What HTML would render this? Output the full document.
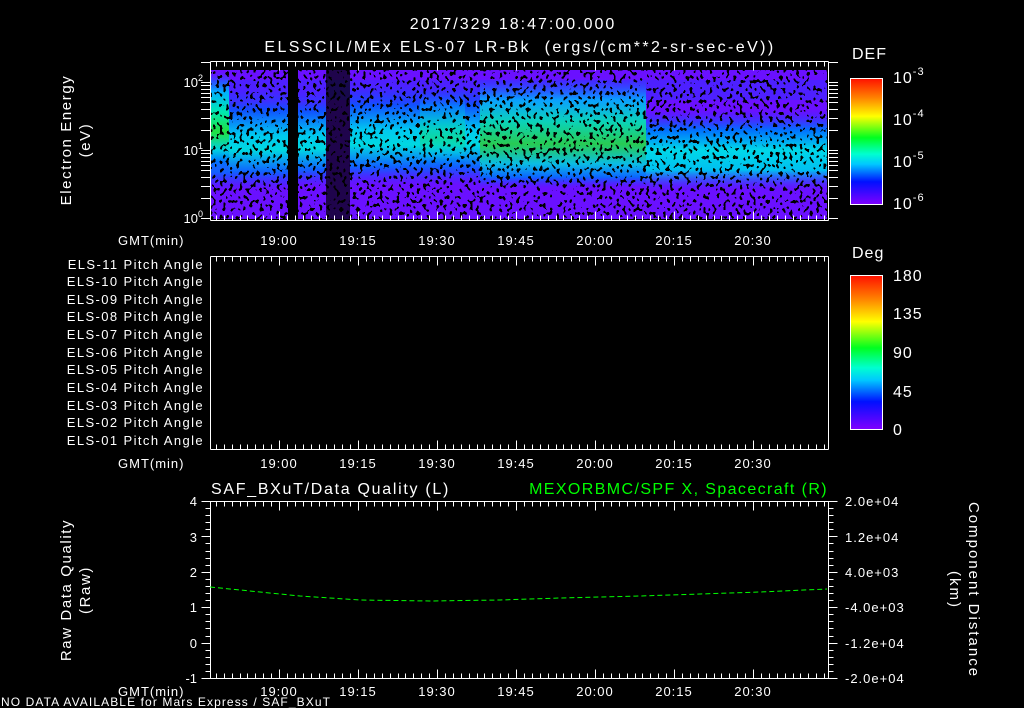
<!DOCTYPE html>
<html><head><meta charset="utf-8"><style>
html,body{margin:0;padding:0;background:#000;}
svg{display:block}
text{font-family:"Liberation Sans",sans-serif;fill:#fff;white-space:pre;}
</style></head><body>
<svg id="s" width="1024" height="708" viewBox="0 0 1024 708" xmlns="http://www.w3.org/2000/svg">
<defs>
<filter id="nz" x="0" y="0" width="100%" height="100%" filterUnits="userSpaceOnUse" color-interpolation-filters="sRGB">
<feTurbulence type="fractalNoise" baseFrequency="0.3 0.25" numOctaves="1" seed="7"/>
<feColorMatrix type="matrix" values="0 0 0 0 0  0 0 0 0 0  0 0 0 0 0  1 0 0 0 0"/>
<feComponentTransfer><feFuncA type="discrete" tableValues="0 0 0 1 1"/></feComponentTransfer>
</filter>
<filter id="nz2" x="0" y="0" width="100%" height="100%" filterUnits="userSpaceOnUse" color-interpolation-filters="sRGB">
<feTurbulence type="fractalNoise" baseFrequency="0.3 0.2" numOctaves="1" seed="3"/>
<feColorMatrix type="matrix" values="0 0 0 0 0  0 0 0 0 0  0 0 0 0 0  1 0 0 0 0"/>
<feComponentTransfer><feFuncA type="discrete" tableValues="0 0 0 0 0 0 0 1"/></feComponentTransfer>
</filter>
<linearGradient id="cb" x1="0" y1="0" x2="0" y2="1">
<stop offset="0" stop-color="#ff1000"/><stop offset="0.15" stop-color="#ff8000"/>
<stop offset="0.3" stop-color="#ffff00"/><stop offset="0.47" stop-color="#00ff20"/>
<stop offset="0.6" stop-color="#00ffd0"/><stop offset="0.68" stop-color="#00c8ff"/>
<stop offset="0.82" stop-color="#0010ff"/><stop offset="1" stop-color="#8000ff"/>
</linearGradient>
<linearGradient id="bandA" x1="0" y1="0" x2="0" y2="1">
<stop offset="0" stop-color="#2040ff" stop-opacity="0"/><stop offset="0.2" stop-color="#1050ff"/>
<stop offset="0.45" stop-color="#00c8f0"/><stop offset="0.6" stop-color="#00d8e0"/>
<stop offset="0.82" stop-color="#1060ff"/><stop offset="1" stop-color="#3030ff" stop-opacity="0"/>
</linearGradient>
<linearGradient id="bandG" x1="0" y1="0" x2="0" y2="1">
<stop offset="0" stop-color="#1060ff" stop-opacity="0"/><stop offset="0.2" stop-color="#00b0ff"/>
<stop offset="0.4" stop-color="#00e8b0"/><stop offset="0.6" stop-color="#20e040"/>
<stop offset="0.78" stop-color="#00d0e0"/><stop offset="0.9" stop-color="#0070ff"/>
<stop offset="1" stop-color="#3030ff" stop-opacity="0"/>
</linearGradient>
<linearGradient id="bandB" x1="0" y1="0" x2="0" y2="1">
<stop offset="0" stop-color="#3030ff" stop-opacity="0"/><stop offset="0.25" stop-color="#0070ff"/>
<stop offset="0.5" stop-color="#00d8e8"/><stop offset="0.75" stop-color="#00c0f0"/>
<stop offset="1" stop-color="#2040ff" stop-opacity="0"/>
</linearGradient>
</defs>

<rect x="211" y="70" width="616" height="149" fill="#6a10ff"/>
<rect x="211" y="80" width="616" height="20" fill="#3030ff" opacity="0.5"/>
<rect x="211" y="90" width="77" height="100" fill="url(#bandA)"/>
<rect x="211" y="72" width="18" height="100" fill="url(#bandG)"/>
<rect x="298" y="92" width="28" height="95" fill="url(#bandA)"/>
<rect x="350" y="85" width="130" height="100" fill="url(#bandA)"/>
<rect x="480" y="78" width="166" height="110" fill="url(#bandG)" opacity="0.9"/>
<rect x="420" y="90" width="45" height="80" fill="url(#bandG)" opacity="0.4"/>
<rect x="646" y="110" width="181" height="80" fill="url(#bandB)"/>
<rect x="211" y="70" width="616" height="149" fill="#000" filter="url(#nz2)"/>
<rect x="211" y="70" width="616" height="25" fill="#000" filter="url(#nz)"/>
<rect x="646" y="70" width="181" height="50" fill="#000" filter="url(#nz)"/>
<rect x="211" y="186" width="616" height="33" fill="#000" filter="url(#nz)"/>
<rect x="288" y="70" width="10" height="149" fill="#000"/>
<rect x="326" y="70" width="24" height="149" fill="#000" opacity="0.7"/>

<g id="ax" stroke="#fff" stroke-width="1" fill="none"></g>

<rect x="850.5" y="78.5" width="32" height="126" fill="url(#cb)" stroke="#fff"/>
<rect x="850.5" y="275.5" width="32" height="154" fill="url(#cb)" stroke="#fff"/>

<text x="513" y="29" font-size="16" text-anchor="middle" letter-spacing="2">2017/329 18:47:00.000</text>
<text x="520" y="52" font-size="16" text-anchor="middle" letter-spacing="2.4">ELSSCIL/MEx ELS-07 LR-Bk  (ergs/(cm**2-sr-sec-eV))</text>
<text x="852" y="59" font-size="16" letter-spacing="1">DEF</text>
<text x="852" y="258" font-size="16" letter-spacing="1">Deg</text>
<g font-size="16" letter-spacing="1">
<text x="893" y="83">10<tspan font-size="11" dy="-8">-3</tspan></text>
<text x="893" y="125">10<tspan font-size="11" dy="-8">-4</tspan></text>
<text x="893" y="167">10<tspan font-size="11" dy="-8">-5</tspan></text>
<text x="893" y="209">10<tspan font-size="11" dy="-8">-6</tspan></text>
<text x="893" y="281">180</text><text x="893" y="319">135</text>
<text x="893" y="358">90</text><text x="893" y="397">45</text><text x="893" y="435">0</text>
</g>
<g font-size="13" text-anchor="end">
<text x="203" y="87">10<tspan font-size="9" dy="-6">2</tspan></text>
<text x="203" y="155">10<tspan font-size="9" dy="-6">1</tspan></text>
<text x="203" y="223">10<tspan font-size="9" dy="-6">0</tspan></text>
</g>
<text transform="translate(71,140) rotate(-90)" font-size="15" text-anchor="middle" letter-spacing="1.6">Electron Energy</text>
<text transform="translate(90,140) rotate(-90)" font-size="15" text-anchor="middle" letter-spacing="1.6">(eV)</text>

<g font-size="13" letter-spacing="1">
<text x="118" y="245">GMT(min)</text>
<text x="118" y="468">GMT(min)</text>
<text x="118" y="696">GMT(min)</text>
</g>
<g id="tl" font-size="13" text-anchor="middle" letter-spacing="1"></g>

<g font-size="13" text-anchor="end" letter-spacing="1.4">
<text x="204" y="269">ELS-11 Pitch Angle</text>
<text x="204" y="286">ELS-10 Pitch Angle</text>
<text x="204" y="304">ELS-09 Pitch Angle</text>
<text x="204" y="321">ELS-08 Pitch Angle</text>
<text x="204" y="339">ELS-07 Pitch Angle</text>
<text x="204" y="357">ELS-06 Pitch Angle</text>
<text x="204" y="374">ELS-05 Pitch Angle</text>
<text x="204" y="392">ELS-04 Pitch Angle</text>
<text x="204" y="410">ELS-03 Pitch Angle</text>
<text x="204" y="427">ELS-02 Pitch Angle</text>
<text x="204" y="445">ELS-01 Pitch Angle</text>
</g>

<text x="211" y="494" font-size="16" letter-spacing="1.7">SAF_BXuT/Data Quality (L)</text>
<text x="828" y="494" font-size="16" text-anchor="end" letter-spacing="1.4" style="fill:#00ff00">MEXORBMC/SPF X, Spacecraft (R)</text>
<g font-size="13" text-anchor="end">
<text x="197" y="506">4</text><text x="197" y="542">3</text><text x="197" y="577">2</text>
<text x="197" y="612">1</text><text x="197" y="648">0</text><text x="197" y="683">-1</text>
</g>
<g font-size="13" letter-spacing="1">
<text x="845" y="506">2.0e+04</text><text x="845" y="542">1.2e+04</text><text x="845" y="577">4.0e+03</text>
<text x="845" y="612">-4.0e+03</text><text x="845" y="648">-1.2e+04</text><text x="845" y="683">-2.0e+04</text>
</g>
<text transform="translate(71,590) rotate(-90)" font-size="15" text-anchor="middle" letter-spacing="1.6">Raw Data Quality</text>
<text transform="translate(90,590) rotate(-90)" font-size="15" text-anchor="middle" letter-spacing="1.6">(Raw)</text>
<text transform="translate(969,590) rotate(90)" font-size="15" text-anchor="middle" letter-spacing="2">Component Distance</text>
<text transform="translate(950,590) rotate(90)" font-size="15" text-anchor="middle" letter-spacing="2">(km)</text>

<polyline points="210,587 260,592 300,596 360,600 430,601 500,600 560,598 640,596 700,594 760,592 827,589" fill="none" stroke="#00ff00" stroke-width="1" stroke-dasharray="5,3"/>

<text x="1" y="706" font-size="12" letter-spacing="1.1">NO DATA AVAILABLE for Mars Express / SAF_BXuT</text>
</svg>
<script>
(function(){
var g=document.getElementById('ax'),tl=document.getElementById('tl'),d='';
function L(x1,y1,x2,y2){d+='M'+x1+' '+y1+'L'+x2+' '+y2;}
var panels=[[61,220,240],[256,449,463],[501,678,691]];
var labs=['19:00','19:15','19:30','19:45','20:00','20:15','20:30'];
panels.forEach(function(p){
 var t=p[0]+0.5,b=p[1]+0.5;
 L(210.5,t,828.5,t);L(210.5,b,828.5,b);
 L(210.5,t,210.5,b);L(828.5,t,828.5,b);
 for(var k=-9;k<70;k++){
  var x=Math.round(279+k*7.9)+0.5; if(x<211||x>827)continue;
  var maj=(k%10==0),len=maj?9:5;
  L(x,t,x,t+len);L(x,b,x,b-len);
 }
 labs.forEach(function(s,i){
  var e=document.createElementNS('http://www.w3.org/2000/svg','text');
  e.setAttribute('x',279+i*79);e.setAttribute('y',p[2]+5);e.textContent=s;tl.appendChild(e);
 });
});
[[218,150],[150,82],[82,14]].forEach(function(dc){
 for(var k=1;k<10;k++){
  var y=Math.round(dc[0]-(dc[0]-dc[1])*Math.log10(k))+0.5;
  if(y<62)continue;
  L(201,y,210.5,y);L(828.5,y,838,y);
 }
});
for(var k=0;k<=25;k++){
 var y=Math.round(501+k*177/25)+0.5,len=(k%5==0)?9:5;
 L(210.5-len,y,210.5,y);L(828.5,y,828.5+len,y);
}
for(var k=1;k<15;k++){var y=Math.round(78+k*126/15)+0.5;L(876,y,882.5,y);}
for(var k=1;k<20;k++){var y=Math.round(276+k*154/20)+0.5;L(876,y,882.5,y);}
var pth=document.createElementNS('http://www.w3.org/2000/svg','path');
pth.setAttribute('d',d);g.appendChild(pth);
})();
</script>
</body></html>
